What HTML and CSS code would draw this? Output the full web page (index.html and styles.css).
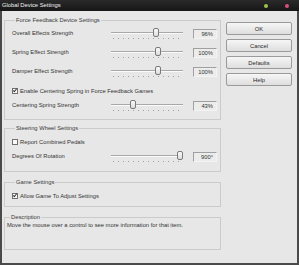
FILE: index.html
```html
<!DOCTYPE html>
<html lang="en">
<head>
    <meta charset="UTF-8">
    <title>Global Device Settings</title>
    <link rel="stylesheet" href="styles.css">
</head>
<body>
    <div class="titlebar">
        <span class="title">Global Device Settings</span>
        <span class="dot green"></span>
        <span class="dot red"></span>
    </div>
    <div class="client">
        <div class="groups">
            <fieldset class="group g-force">
                <legend>Force Feedback Device Settings</legend>
                <div class="row">
                    <span class="label">Overall Effects Strength</span>
                    <div class="slider"><div class="thumb" style="left: 42px"></div></div>
                    <span class="value">96%</span>
                </div>
                <div class="row">
                    <span class="label">Spring Effect Strength</span>
                    <div class="slider"><div class="thumb" style="left: 44px"></div></div>
                    <span class="value">100%</span>
                </div>
                <div class="row">
                    <span class="label">Damper Effect Strength</span>
                    <div class="slider"><div class="thumb" style="left: 44px"></div></div>
                    <span class="value">100%</span>
                </div>
                <label class="check c-spring"><span class="box checked"></span>Enable Centering Spring in Force Feedback Games</label>
                <div class="row r-center">
                    <span class="label">Centering Spring Strength</span>
                    <div class="slider"><div class="thumb" style="left: 19px"></div></div>
                    <span class="value">43%</span>
                </div>
            </fieldset>
            <fieldset class="group g-wheel">
                <legend>Steering Wheel Settings</legend>
                <label class="check"><span class="box"></span>Report Combined Pedals</label>
                <div class="row r-degrees">
                    <span class="label">Degrees Of Rotation</span>
                    <div class="slider"><div class="thumb" style="left: 66px"></div></div>
                    <span class="value">900°</span>
                </div>
            </fieldset>
            <fieldset class="group g-game">
                <legend>Game Settings</legend>
                <label class="check"><span class="box checked"></span>Allow Game To Adjust Settings</label>
            </fieldset>
            <fieldset class="group g-desc">
                <legend>Description</legend>
                <p class="desc">Move the mouse over a control to see more information for that item.</p>
            </fieldset>
        </div>
        <div class="buttons">
            <button>OK</button>
            <button>Cancel</button>
            <button>Defaults</button>
            <button>Help</button>
        </div>
    </div>
</body>
</html>
```

FILE: styles.css
```css
body {
    margin: 0;
    width: 299px;
    height: 265px;
    background: #4a4a4a;
    font-family: "Liberation Sans", Arial, sans-serif;
    font-size: 5.8px;
    color: #333;
    overflow: hidden;
}
.titlebar {
    height: 11px;
    background: linear-gradient(#2a2a2a, #161616);
    display: flex;
    align-items: center;
    padding: 0 0 0 2px;
}
.title {
    color: #f2f2f2;
    flex: 1;
    line-height: 11px;
}
.dot {
    width: 4px;
    height: 4px;
    border-radius: 50%;
}
.green {
    background: #9cc24a;
    margin-right: 17px;
}
.red {
    background: #d8507a;
    margin-right: 10px;
}
.client {
    margin: 0 2px;
    height: 252px;
    background: #e7e7e7;
    display: flex;
}
.groups {
    width: 217px;
    margin-left: 2px;
}
.group {
    margin: 0;
    padding: 0 3px 0 7px;
    border: 1px solid #cbcbcb;
    min-width: 0;
}
.group legend {
    padding: 0 1px;
    margin-left: 3px;
    line-height: 8px;
    color: #3a3a3a;
}
.g-force {
    margin-top: 5px;
    padding-top: 4px;
    padding-bottom: 7px;
}
.g-wheel {
    margin-top: 4px;
    padding-top: 6px;
    padding-bottom: 8px;
}
.g-game {
    margin-top: 6px;
    padding-top: 6px;
    padding-bottom: 6px;
}
.g-desc {
    margin-top: 6px;
    height: 35px;
    padding-left: 2px;
}
.row {
    display: grid;
    grid-template-columns: 99px 82px 24px;
    height: 12px;
    margin-bottom: 7px;
    align-items: start;
}
.row .label {
    line-height: 10px;
}
.r-center {
    margin-top: 5px;
    margin-bottom: 0;
}
.r-degrees {
    margin-top: 5px;
    margin-bottom: 0;
}
.slider {
    position: relative;
    width: 72px;
    height: 12px;
}
.slider::before {
    content: "";
    position: absolute;
    left: 0;
    right: 0;
    top: 4px;
    height: 1px;
    background: #a8a8a8;
    border-bottom: 1px solid #fafafa;
}
.slider::after {
    content: "";
    position: absolute;
    left: 2px;
    right: 2px;
    top: 10px;
    height: 1px;
    background: repeating-linear-gradient(to right, #a0a0a0 0 1px, transparent 1px 5px);
}
.thumb {
    position: absolute;
    top: 0;
    width: 4px;
    height: 7px;
    border: 1px solid #7a7a7a;
    border-radius: 2px;
    background: linear-gradient(#fafafa, #dcdcdc);
    z-index: 1;
}
.value {
    margin-top: 1px;
    height: 8px;
    line-height: 8px;
    border: 1px solid #a0a0a0;
    border-right-color: #f4f4f4;
    border-bottom-color: #f4f4f4;
    background: #ececec;
    text-align: right;
    padding-right: 3px;
}
.check {
    display: flex;
    align-items: center;
    height: 8px;
    line-height: 8px;
}
.c-spring {
    margin-top: 9px;
}
.box {
    width: 4px;
    height: 4px;
    border: 1px solid #707070;
    background: #fafafa;
    margin-right: 2px;
    position: relative;
}
.box.checked::after {
    content: "";
    position: absolute;
    left: 1px;
    top: -1px;
    width: 1px;
    height: 3px;
    border: solid #333;
    border-width: 0 1px 1px 0;
    transform: rotate(40deg);
}
.desc {
    margin: 0;
    line-height: 8px;
    color: #333;
}
.buttons {
    width: 66px;
    margin-left: 5px;
    padding-top: 11px;
    display: flex;
    flex-direction: column;
    gap: 4px;
}
.buttons button {
    height: 13px;
    padding: 0;
    font-family: "Liberation Sans", Arial, sans-serif;
    font-size: 5.8px;
    color: #2a2a2a;
    border: 1px solid #9a9a9a;
    border-radius: 2px;
    background: linear-gradient(#f6f6f6, #dedede);
}
```
